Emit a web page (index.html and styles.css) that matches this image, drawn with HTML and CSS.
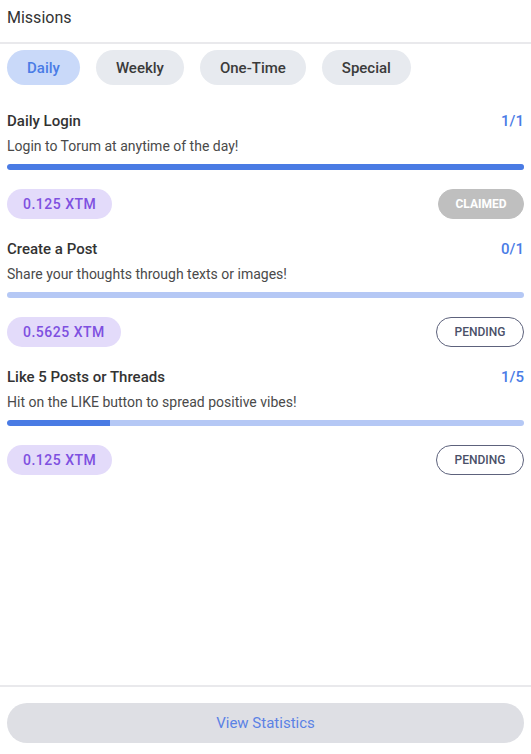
FILE: index.html
```html
<!DOCTYPE html>
<html lang="en">
<head>
    <meta charset="UTF-8">
    <meta name="viewport" content="width=device-width, initial-scale=1.0">
    <title>Missions</title>
    <link rel="stylesheet" href="styles.css">
</head>
<body>

    <!-- Header -->
    <div class="header">Missions</div>

    <div class="main">
        <!-- Tabs -->
        <div class="tabs">
            <button class="tab active">Daily</button>
            <button class="tab">Weekly</button>
            <button class="tab">One-Time</button>
            <button class="tab">Special</button>
        </div>

        <!-- Mission list -->
        <div class="missions">
            <div class="mission">
                <div class="mission-top">
                    <span class="mission-title">Daily Login</span>
                    <span class="mission-count">1/1</span>
                </div>
                <p class="mission-desc">Login to Torum at anytime of the day!</p>
                <div class="bar"><div class="bar-fill" style="width: 100%"></div></div>
                <div class="mission-bottom">
                    <span class="reward">0.125 XTM</span>
                    <span class="status claimed">CLAIMED</span>
                </div>
            </div>

            <div class="mission">
                <div class="mission-top">
                    <span class="mission-title">Create a Post</span>
                    <span class="mission-count">0/1</span>
                </div>
                <p class="mission-desc">Share your thoughts through texts or images!</p>
                <div class="bar"><div class="bar-fill" style="width: 0%"></div></div>
                <div class="mission-bottom">
                    <span class="reward">0.5625 XTM</span>
                    <span class="status pending">PENDING</span>
                </div>
            </div>

            <div class="mission">
                <div class="mission-top">
                    <span class="mission-title">Like 5 Posts or Threads</span>
                    <span class="mission-count">1/5</span>
                </div>
                <p class="mission-desc">Hit on the LIKE button to spread positive vibes!</p>
                <div class="bar"><div class="bar-fill" style="width: 20%"></div></div>
                <div class="mission-bottom">
                    <span class="reward">0.125 XTM</span>
                    <span class="status pending">PENDING</span>
                </div>
            </div>
        </div>
    </div>

    <!-- Footer -->
    <div class="footer">
        <button class="stats-btn">View Statistics</button>
    </div>

</body>
</html>
```

FILE: styles.css
```css
html, body {
    height: 100%;
}
body {
    margin: 0;
    font-family: Roboto, "Liberation Sans", sans-serif;
    background: #fff;
    color: #333;
    display: flex;
    flex-direction: column;
}
.header {
    height: 42px;
    line-height: 36px;
    padding: 0 7px;
    font-size: 16px;
    color: #333;
    border-bottom: 2px solid #e9e9ec;
}
.main {
    flex: 1;
    padding: 6px 7px 0;
}
.tabs {
    display: flex;
    gap: 16px;
}
.tab {
    height: 35px;
    padding: 0 20px;
    border: none;
    border-radius: 18px;
    background: #e7eaef;
    color: #3b3b3b;
    font-family: inherit;
    font-size: 15px;
    font-weight: 500;
}
.tab.active {
    background: #c9d9f9;
    color: #4a7ce6;
}
.missions {
    margin-top: 26px;
}
.mission {
    margin-bottom: 20px;
}
.mission-top {
    display: flex;
    justify-content: space-between;
    line-height: 20px;
}
.mission-title {
    font-size: 15px;
    font-weight: 500;
    color: #333;
}
.mission-count {
    font-size: 15px;
    font-weight: 500;
    color: #4a7ce6;
}
.mission-desc {
    margin: 5px 0 0;
    font-size: 14px;
    line-height: 20px;
    color: #4a4a4a;
}
.bar {
    margin-top: 8px;
    height: 6px;
    border-radius: 3px;
    background: #b5c8f5;
    overflow: hidden;
}
.bar-fill {
    height: 100%;
    background: #4a7be4;
    border-radius: 3px 0 0 3px;
}
.mission-bottom {
    display: flex;
    justify-content: space-between;
    align-items: center;
    margin-top: 19px;
}
.reward {
    height: 30px;
    line-height: 30px;
    padding: 0 16px;
    border-radius: 15px;
    background: #e3dbfa;
    color: #7e50e0;
    font-size: 14px;
    font-weight: 500;
    letter-spacing: 0.5px;
}
.status {
    box-sizing: border-box;
    height: 30px;
    line-height: 28px;
    border-radius: 15px;
    font-size: 12px;
    font-weight: 500;
    text-align: center;
}
.claimed {
    width: 86px;
    background: #bfbfbf;
    color: #fff;
    font-weight: 700;
    border: 1px solid #bfbfbf;
}
.pending {
    width: 88px;
    background: #fff;
    color: #4a5068;
    border: 1px solid #5d627c;
}
.footer {
    border-top: 2px solid #e9e9ec;
    padding: 16px 7px 11px;
}
.stats-btn {
    display: block;
    width: 100%;
    height: 40px;
    border: none;
    border-radius: 20px;
    background: #dedfe4;
    color: #5b82e4;
    font-family: inherit;
    font-size: 15px;
}
```
